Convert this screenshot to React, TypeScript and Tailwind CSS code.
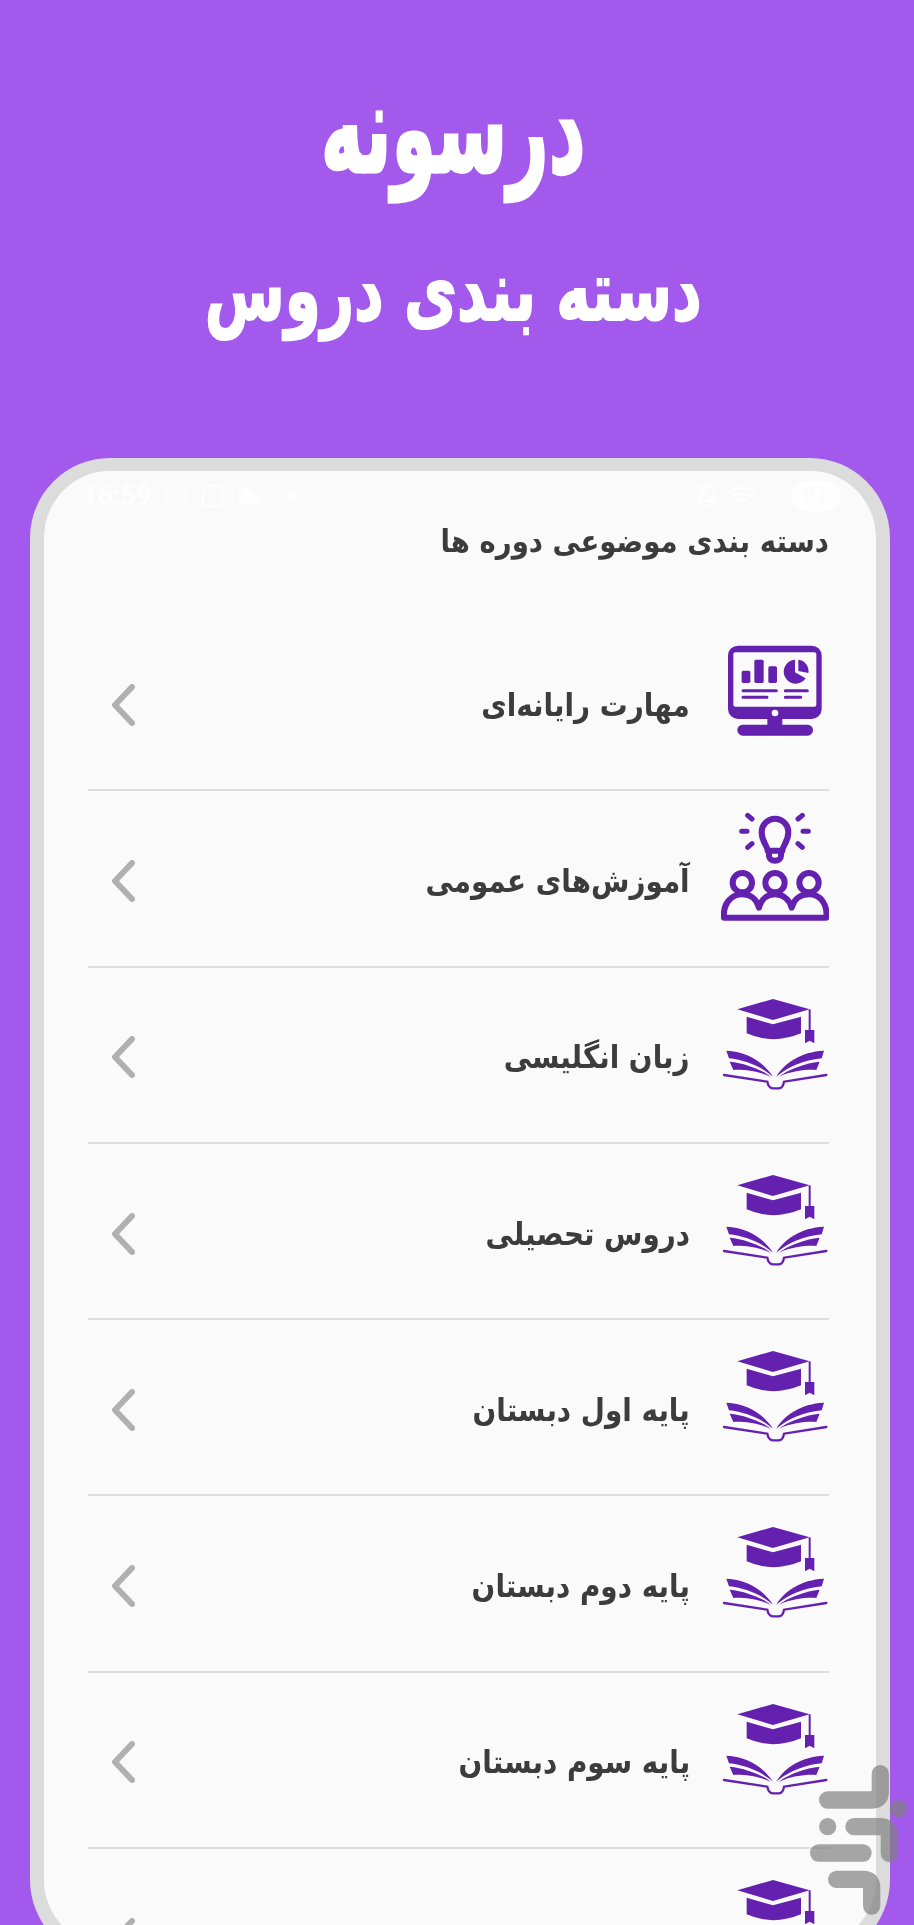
import { BellOff, Wifi, Signal, Scan, MessageCircle, Cloud } from 'lucide-react';

const rows = [
  { title: 'مهارت رایانه‌ای', icon: 'monitor' },
  { title: 'آموزش‌های عمومی', icon: 'people' },
  { title: 'زبان انگلیسی', icon: 'cap' },
  { title: 'دروس تحصیلی', icon: 'cap' },
  { title: 'پایه اول دبستان', icon: 'cap' },
  { title: 'پایه دوم دبستان', icon: 'cap' },
  { title: 'پایه سوم دبستان', icon: 'cap' },
  { title: 'پایه چهارم دبستان', icon: 'cap' },
];

const PURPLE = '#6420ae';

function MonitorIcon() {
  return (
    <svg viewBox="96 18 324 360" className="w-[108px] h-[120px] shrink-0">
      <rect x="117" y="50" width="281" height="220" rx="30" fill={PURPLE} />
      <rect x="133" y="70" width="249" height="163" rx="6" fill="#fafafa" />
      <circle cx="258" cy="252" r="10" fill="#fafafa" />
      <rect x="235" y="268" width="45" height="24" fill={PURPLE} />
      <rect x="145" y="287" width="227" height="33" rx="16" fill={PURPLE} />
      <rect x="158" y="125" width="26" height="37" rx="5" fill={PURPLE} />
      <rect x="196" y="92" width="28" height="70" rx="5" fill={PURPLE} />
      <rect x="238" y="112" width="26" height="50" rx="5" fill={PURPLE} />
      <path d="M318 92a36 36 0 1 0 32 56l-32-18z" fill={PURPLE} />
      <path d="M328 92a34 34 0 0 1 30 40l-30-6z" fill={PURPLE} />
      <path d="M162 185h100M162 205h72M289 185h66M289 205h46" stroke={PURPLE} strokeWidth="9" strokeLinecap="round" />
    </svg>
  );
}

function PeopleIcon() {
  return (
    <svg viewBox="96 545 324 360" className="w-[108px] h-[120px] shrink-0" fill="none" stroke={PURPLE} strokeWidth="18" strokeLinecap="round" strokeLinejoin="round">
      <path d="M236 664c0-16-18-24-18-56a40 40 0 0 1 80 0c0 32-18 40-18 56z" />
      <path d="M240 668v12a18 14 0 0 0 36 0v-12" />
      <path d="M176 558l13 11M340 558l-13 11M158 606h16M342 606h16M176 654l13-11M340 654l-13-11" strokeWidth="15" />
      <circle cx="160" cy="760" r="29" />
      <circle cx="258" cy="760" r="29" />
      <circle cx="360" cy="760" r="29" />
      <path d="M105 865c-4-42 22-70 55-70 26 0 44 16 50 40 6-24 24-40 48-40s44 16 50 40c6-24 24-40 52-40 33 0 56 28 52 70z" />
    </svg>
  );
}

function CapIcon() {
  return (
    <svg viewBox="66 24 324 360" className="w-[108px] h-[120px] shrink-0" fill={PURPLE}>
      <path d="M115 88L222 57L332 88L222 120Z" />
      <path d="M143 110L222 133L306 110V160Q222 195 143 160Z" />
      <path d="M332 88V150" stroke={PURPLE} strokeWidth="6" />
      <path d="M318 150H346V190L332 182L318 190Z" />
      <path d="M82 212C150 215 195 250 222 290C190 262 140 240 90 235Z" />
      <path d="M92 245C140 250 190 270 215 290C175 272 130 268 103 270Z" />
      <path d="M375 212C305 215 255 250 232 290C265 262 315 240 368 235Z" />
      <path d="M362 245C315 250 265 270 240 290C280 272 325 268 352 270Z" />
      <path d="M75 285L205 305Q208 325 222 325H240Q252 325 255 305L382 285" fill="none" stroke={PURPLE} strokeWidth="7" strokeLinecap="round" />
    </svg>
  );
}

function Chevron() {
  return (
    <svg viewBox="0 0 24 42" className="w-[24px] h-[42px] shrink-0 blur-[0.6px]" fill="none" stroke="#b0b0b0" strokeWidth="6" strokeLinecap="round" strokeLinejoin="round">
      <polyline points="21,3 4,21 21,39" />
    </svg>
  );
}

export default function App() {
  return (
    <div dir="rtl" className="relative h-[1925px] overflow-hidden bg-[#a259ec] font-['DejaVu_Sans',sans-serif]">
      <div className="flex flex-col items-center h-[458px] pt-[54px] pr-[8px]">
        <h1 className="text-[124px] leading-[150px] font-bold text-white scale-x-[.58] [-webkit-text-stroke:3px_white]">درسونه</h1>
        <h2 className="mt-[32px] text-[84px] leading-[110px] font-bold text-white scale-x-[.69] [-webkit-text-stroke:2px_white]">دسته بندی دروس</h2>
      </div>

      <div className="ml-[30px] mr-[24px] h-[1502px] rounded-[80px] border-[14px] border-t-[13px] border-[#dcdcdc] bg-[#fafafa] pl-[44px] pr-[47px]">
        <div dir="ltr" className="flex items-center justify-between h-[46px] pt-[4px] -ml-[6px] mr-[-11px] text-[#fefefe]">
          <div className="flex items-center gap-[12px]">
            <span className="text-[27px] font-bold font-['Roboto',sans-serif]">16:59</span>
            <Scan size={24} strokeWidth={2} />
            <MessageCircle size={26} strokeWidth={2} />
            <Cloud size={24} fill="#fefefe" />
            <span className="ml-[14px] w-[8px] h-[8px] rounded-full bg-[#fefefe]" />
          </div>
          <div className="flex items-center gap-[8px]">
            <BellOff size={24} strokeWidth={2.5} />
            <Wifi size={28} strokeWidth={2.5} />
            <Signal size={20} strokeWidth={1} />
            <span className="w-[48px] h-[30px] rounded-full bg-[#fefefe] text-[22px] leading-[30px] text-center text-[#fbfbfb] font-['Roboto',sans-serif]">81</span>
          </div>
        </div>
        <p className="mt-[4px] origin-right scale-x-[.89] text-[31px] leading-[40px] font-bold text-[#3c3c3c]">دسته بندی موضوعی دوره ها</p>
        <div className="mt-[54px]">
          {rows.map((row) => (
            <div key={row.title} className="flex items-start h-[176.3px] border-b-2 border-[#dddddd]">
              <div className="pt-[20px]">
                {row.icon === 'monitor' && <MonitorIcon />}
                {row.icon === 'people' && <PeopleIcon />}
                {row.icon === 'cap' && <CapIcon />}
              </div>
              <div className="flex-1 flex items-center justify-between h-full pt-[5px] pr-[31px] pl-[23px]">
                <span className="inline-block origin-right scale-x-[.87] text-[32px] font-bold text-[#3c3c3c]">{row.title}</span>
                <Chevron />
              </div>
            </div>
          ))}
        </div>
      </div>

      {/* bazaar watermark */}
      <svg viewBox="0 0 402 615" className="absolute left-[780px] top-[1720px] w-[134px] h-[205px]" fill="none" stroke="#808080" strokeOpacity="0.7" strokeWidth="52" strokeLinecap="round" strokeLinejoin="round">
        <path d="M301 161V215Q301 240 276 240H143" />
        <path d="M222 320H300Q328 320 328 348V400" />
        <path d="M116 399H249" />
        <path d="M170 478H250Q275 478 275 503V558" />
        <circle cx="143" cy="320" r="26" fill="#808080" fillOpacity="0.7" stroke="none" />
        <circle cx="355" cy="266" r="26" fill="#808080" fillOpacity="0.7" stroke="none" />
      </svg>
    </div>
  );
}
